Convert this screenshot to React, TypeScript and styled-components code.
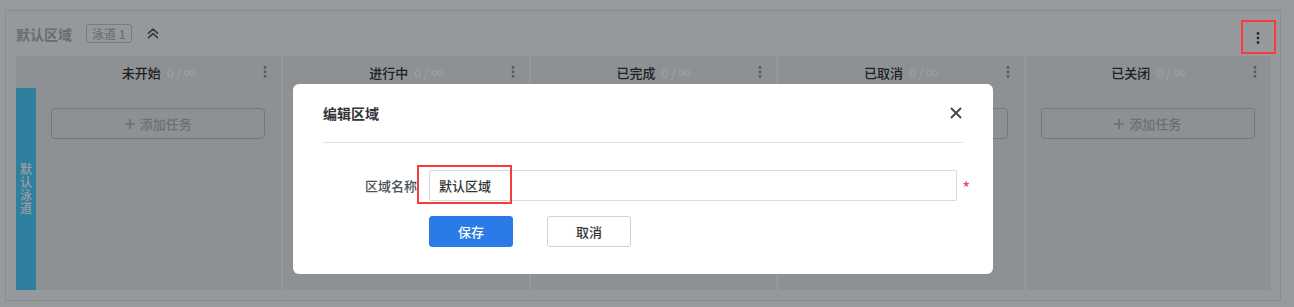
import React from "react";
import styled, { createGlobalStyle } from "styled-components";

const FONT = `"Noto Sans CJK SC", "Noto Sans", "Liberation Sans", sans-serif`;

const GlobalStyle = createGlobalStyle`
  html, body { margin: 0; padding: 0; background: #f4f8fd; font-family: ${FONT}; }
  * { box-sizing: border-box; }
`;

const Page = styled.div`
  height: 307px;
  padding: 10px 13px 0 5px;
`;

const Panel = styled.section`
  height: 291px;
  border: 1px solid #dfe4e8;
  background: #f2f7fc;
  padding: 0 9px 10px 10px;
  display: flex;
  flex-direction: column;
`;

const PanelHeader = styled.div`
  height: 45px;
  display: flex;
  align-items: center;
`;

const AreaTitle = styled.span`
  font-size: 14px;
  font-weight: 700;
  color: #aab0b6;
  line-height: 20px;
`;

const Tag = styled.span`
  margin-left: 14px;
  height: 19px;
  padding: 0 5px;
  border: 1px solid #c3c8cd;
  border-radius: 3px;
  font-size: 12px;
  font-weight: 500;
  line-height: 17px;
  color: #aeb3b8;
`;

const CollapseBtn = styled.span`
  margin-left: 15px;
  display: flex;
  align-items: center;
  color: #4b5e73;
`;

const KebabWrap = styled.span`
  position: relative;
  margin-left: auto;
  margin-right: -2px;
  margin-top: 8px;
  width: 30px;
  height: 30px;
  display: flex;
  align-items: center;
  justify-content: center;
  color: #45494d;
`;

const Highlight = styled.span<{ $l: number; $t: number; $w: number; $h: number }>`
  position: absolute;
  left: ${(p) => p.$l}px;
  top: ${(p) => p.$t}px;
  width: ${(p) => p.$w}px;
  height: ${(p) => p.$h}px;
  border: 2px solid #f63c3c;
  pointer-events: none;
  z-index: 20;
`;

const Board = styled.div`
  flex: 1;
  min-height: 0;
  display: flex;
  gap: 2px;
`;

const Column = styled.div<{ $lane?: boolean }>`
  flex: ${(p) => (p.$lane ? "1 1 20px" : "1 1 0")};
  min-width: 0;
  display: flex;
  flex-direction: column;
  background: #e5eaef;
`;

const ColumnHeader = styled.div<{ $lane?: boolean }>`
  height: 32px;
  display: grid;
  grid-template-columns: 24px 1fr 24px;
  align-items: center;
  padding: 0 4px 0 ${(p) => (p.$lane ? 24 : 4)}px;
`;

const ColumnTitle = styled.div`
  grid-column: 2;
  justify-self: center;
  display: flex;
  align-items: baseline;
`;

const TitleText = styled.span`
  font-size: 13px;
  font-weight: 500;
  color: #30353a;
`;

const Count = styled.span`
  margin-left: 6px;
  font-size: 12px;
  font-weight: 500;
  color: #ffffff;
`;

const ColumnKebab = styled.span`
  grid-column: 3;
  display: flex;
  justify-content: center;
  color: #91969b;
`;

const ColumnBody = styled.div`
  flex: 1;
  display: flex;
`;

const Lane = styled.div`
  width: 20px;
  background: #4ccdff;
  display: flex;
  align-items: center;
  justify-content: center;
`;

const LaneLabel = styled.span`
  writing-mode: vertical-lr;
  text-orientation: upright;
  font-size: 12px;
  font-weight: 500;
  line-height: 13px;
  letter-spacing: 1px;
  color: #ffffff;
`;

const Cell = styled.div`
  flex: 1;
  min-width: 0;
  padding: 20px 16px 0 15px;
`;

const AddButton = styled.button`
  width: 100%;
  height: 31px;
  border: 1px solid #bcc1c6;
  border-radius: 4px;
  background: transparent;
  display: flex;
  align-items: center;
  justify-content: center;
  gap: 5px;
  font-family: ${FONT};
  font-size: 13px;
  font-weight: 500;
  color: #afb4b9;
  padding: 0;
`;

const Overlay = styled.div`
  position: fixed;
  inset: 0;
  background: rgba(0, 0, 0, 0.38);
  z-index: 10;
  display: flex;
  align-items: flex-start;
  padding: 84px 0 0 293px;
`;

const Modal = styled.div`
  flex: 0 0 700px;
  width: 700px;
  background: #fff;
  border-radius: 6px;
  padding: 0 30px 27px 30px;
`;

const ModalHeader = styled.div`
  height: 59px;
  border-bottom: 1px solid #dde2ea;
  display: flex;
  align-items: center;
  justify-content: space-between;
`;

const ModalTitle = styled.span`
  font-size: 14px;
  font-weight: 700;
  color: #333;
`;

const CloseBtn = styled.span`
  display: flex;
  color: #4a4a4a;
  margin-right: 1px;
`;

const FormRow = styled.div`
  margin-top: 27px;
  display: flex;
  align-items: center;
`;

const Label = styled.label`
  flex: 0 0 94px;
  margin-right: 12px;
  text-align: right;
  font-size: 13px;
  font-weight: 500;
  color: #4a5058;
`;

const InputWrap = styled.span`
  position: relative;
  flex: 0 0 auto;
  display: flex;
`;

const Input = styled.input`
  width: 528px;
  height: 31px;
  border: 1px solid #d9dae6;
  border-radius: 2px;
  padding: 0 9px;
  font-family: ${FONT};
  font-size: 13px;
  font-weight: 500;
  color: #333;
  outline: none;
`;

const Required = styled.span`
  flex: 0 0 auto;
  margin-left: 5px;
  font-size: 18px;
  line-height: 18px;
  color: #f2457a;
  margin-top: 3px;
`;

const ButtonRow = styled.div`
  margin-top: 15px;
  padding-left: 106px;
  display: flex;
  gap: 34px;
`;

const Btn = styled.button<{ $primary?: boolean }>`
  width: 84px;
  height: 31px;
  border-radius: 3px;
  font-family: ${FONT};
  font-size: 13px;
  font-weight: 500;
  border: 1px solid ${(p) => (p.$primary ? "#2b7be6" : "#cfd2d6")};
  background: ${(p) => (p.$primary ? "#2b7be6" : "#fff")};
  color: ${(p) => (p.$primary ? "#fff" : "#333")};
  padding: 0;
`;

const Dots = () => (
  <svg width="4" height="12" viewBox="0 0 4 12" fill="currentColor">
    <circle cx="2" cy="1.5" r="1.4" />
    <circle cx="2" cy="6" r="1.4" />
    <circle cx="2" cy="10.5" r="1.4" />
  </svg>
);

const ChevronsUp = () => (
  <svg width="12" height="11" viewBox="0 0 12 11" fill="none" stroke="currentColor" strokeWidth="1.6" strokeLinecap="round" strokeLinejoin="round">
    <path d="M1.5 5.2 L6 1.2 L10.5 5.2" />
    <path d="M1.5 9.6 L6 5.6 L10.5 9.6" />
  </svg>
);

const XIcon = () => (
  <svg width="12" height="12" viewBox="0 0 12 12" fill="none" stroke="currentColor" strokeWidth="2" strokeLinecap="round">
    <path d="M1.5 1.5 L10.5 10.5 M10.5 1.5 L1.5 10.5" />
  </svg>
);

const PlusIcon = () => (
  <svg width="10" height="10" viewBox="0 0 10 10" fill="none" stroke="currentColor" strokeWidth="1.6">
    <path d="M5 0 V10 M0 5 H10" />
  </svg>
);

const columns = ["未开始", "进行中", "已完成", "已取消", "已关闭"];

export default function App() {
  return (
    <>
      <GlobalStyle />
      <Page>
        <Panel>
          <PanelHeader>
            <AreaTitle>默认区域</AreaTitle>
            <Tag>泳道 1</Tag>
            <CollapseBtn>
              <ChevronsUp />
            </CollapseBtn>
            <KebabWrap>
              <Dots />
              <Highlight $l={-2} $t={-3} $w={35} $h={34} />
            </KebabWrap>
          </PanelHeader>
          <Board>
            {columns.map((name, i) => (
              <Column key={name} $lane={i === 0}>
                <ColumnHeader $lane={i === 0}>
                  <ColumnTitle>
                    <TitleText>{name}</TitleText>
                    <Count>0 / ∞</Count>
                  </ColumnTitle>
                  <ColumnKebab>
                    <Dots />
                  </ColumnKebab>
                </ColumnHeader>
                <ColumnBody>
                  {i === 0 && (
                    <Lane>
                      <LaneLabel>默认泳道</LaneLabel>
                    </Lane>
                  )}
                  <Cell>
                    <AddButton>
                      <PlusIcon />
                      添加任务
                    </AddButton>
                  </Cell>
                </ColumnBody>
              </Column>
            ))}
          </Board>
        </Panel>
      </Page>
      <Overlay>
        <Modal>
          <ModalHeader>
            <ModalTitle>编辑区域</ModalTitle>
            <CloseBtn>
              <XIcon />
            </CloseBtn>
          </ModalHeader>
          <FormRow>
            <Label>区域名称</Label>
            <InputWrap>
              <Input defaultValue="默认区域" />
              <Highlight $l={-12} $t={-5} $w={95} $h={39} />
            </InputWrap>
            <Required>*</Required>
          </FormRow>
          <ButtonRow>
            <Btn $primary>保存</Btn>
            <Btn>取消</Btn>
          </ButtonRow>
        </Modal>
      </Overlay>
    </>
  );
}
